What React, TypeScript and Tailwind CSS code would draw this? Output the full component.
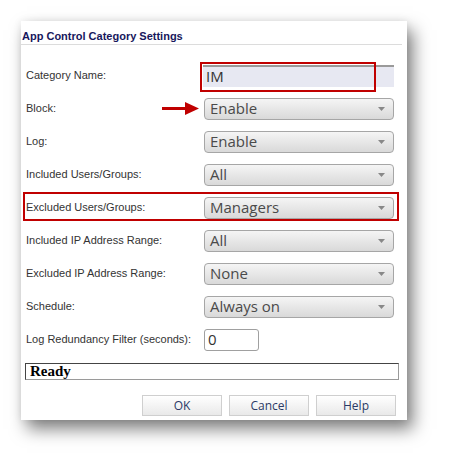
import React from "react";

const rows = [
  { label: "Category Name:", kind: "name", value: "IM" },
  { label: "Block:", kind: "select", value: "Enable", arrow: true },
  { label: "Log:", kind: "select", value: "Enable" },
  { label: "Included Users/Groups:", kind: "select", value: "All" },
  { label: "Excluded Users/Groups:", kind: "select", value: "Managers", boxed: true },
  { label: "Included IP Address Range:", kind: "select", value: "All" },
  { label: "Excluded IP Address Range:", kind: "select", value: "None" },
  { label: "Schedule:", kind: "select", value: "Always on" },
  { label: "Log Redundancy Filter (seconds):", kind: "number", value: "0" },
];

function Select({ value }: { value: string }) {
  return (
    <div className="flex h-[22px] w-[190px] items-center justify-between rounded-[4px] border border-[#a6a6a6] bg-gradient-to-b from-[#f5f5f5] to-[#d9d9d9] pl-[5px] pr-[8px] font-['Open_Sans',sans-serif] text-[15px] text-[#4a4a4a]">
      <span className="leading-none">{value}</span>
      <svg width="7" height="4" viewBox="0 0 7 4">
        <path d="M0 0H7L3.5 4Z" fill="#888" />
      </svg>
    </div>
  );
}

export default function App() {
  return (
    <div className="h-[463px] w-[449px] bg-white pl-[21px] pt-[21px]">
      <div className="flex h-[399px] w-[386px] flex-col bg-white shadow-[6px_9px_16px_rgba(0,0,0,0.5),0_0_8px_rgba(0,0,0,0.08)]">
        <div className="mr-[5px] h-[24px] border-b border-[#dcdcdc] pl-[1px] pt-[8px] font-['Liberation_Sans',Arial,sans-serif] text-[11px] font-bold leading-[14px] text-[#17175c]">
          App Control Category Settings
        </div>
        <div className="mt-[14px] flex flex-col">
          {rows.map((r) => (
            <div key={r.label} className="relative flex h-[33px] items-center">
              <span className="w-[183px] pl-[5px] font-['Liberation_Sans',Arial,sans-serif] text-[11px] text-[#333]">
                {r.label}
              </span>
              {r.kind === "select" && <Select value={r.value} />}
              {r.kind === "name" && (
                <div className="ml-[-1px] flex h-[22px] w-[191px] items-center border-t-2 border-[#9a9a9a] bg-[#e7e8f2] pl-[3px] font-['Open_Sans',sans-serif] text-[15px] text-[#333]">
                  IM
                </div>
              )}
              {r.kind === "number" && (
                <div className="flex h-[22px] w-[55px] items-center rounded-[3px] border border-[#a0a0a0] bg-white pl-[3px] font-['Open_Sans',sans-serif] text-[15px] text-[#333]">
                  {r.value}
                </div>
              )}
              {r.kind === "name" && (
                <div className="absolute left-[179px] top-[3px] h-[30px] w-[176px] border-2 border-[#c00000]" />
              )}
              {r.boxed && (
                <div className="absolute left-[2px] top-[1px] h-[29px] w-[376px] border-2 border-[#c00000]" />
              )}
              {r.arrow && (
                <svg
                  className="absolute left-[141px] top-[10px]"
                  width="37"
                  height="13"
                  viewBox="0 0 37 13"
                >
                  <rect x="0" y="5" width="25" height="3" fill="#c00000" />
                  <path d="M23 0L37 6.5L23 13Z" fill="#c00000" />
                </svg>
              )}
            </div>
          ))}
        </div>
        <div className="ml-[4px] mt-[7px] flex h-[17px] w-[374px] items-center border border-[#9a9a9a] border-l-[#444] border-t-[#444] pl-[4px] font-['Liberation_Serif',serif] text-[15px] font-bold leading-none text-black">
          Ready
        </div>
        <div className="mt-[15px] flex gap-[7px] pl-[121px]">
          {["OK", "Cancel", "Help"].map((b) => (
            <div
              key={b}
              className="flex h-[21px] w-[80px] items-center justify-center border border-[#cfcfcf] bg-gradient-to-b from-white to-[#e9e9e9] font-['Open_Sans',sans-serif] text-[12px] text-[#2b3a66]"
            >
              {b}
            </div>
          ))}
        </div>
      </div>
    </div>
  );
}
